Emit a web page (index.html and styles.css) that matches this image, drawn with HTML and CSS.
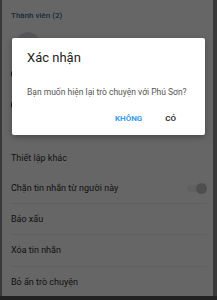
FILE: index.html
```html
<!DOCTYPE html>
<html lang="vi">
<head>
<meta charset="utf-8">
<link rel="stylesheet" href="styles.css">
</head>
<body>
<div class="frame">
  <div class="page">
    <div class="section-title">Thành viên (2)</div>
    <div class="member"><span class="avatar"></span></div>
    <div class="member small"><span class="icon"></span></div>
    <div class="member small"><span class="icon"></span></div>
    <div class="group-title">Thiết lập khác</div>
    <div class="row">
      <span>Chặn tin nhắn từ người này</span>
      <span class="toggle"><span class="knob"></span></span>
    </div>
    <div class="row">Báo xấu</div>
    <div class="row">Xóa tin nhắn</div>
    <div class="row last">Bỏ ẩn trò chuyện</div>
  </div>
</div>
<div class="overlay"></div>
<div class="dialog">
  <div class="dialog-title">Xác nhận</div>
  <div class="dialog-text">Bạn muốn hiện lại trò chuyện với Phú Sơn?</div>
  <div class="dialog-actions">
    <span class="btn btn-no">KHÔNG</span>
    <span class="btn btn-yes">CÓ</span>
  </div>
</div>
</body>
</html>
```
FILE: styles.css
```css
html, body {
  margin: 0;
  padding: 0;
  width: 217px;
  height: 300px;
  overflow: hidden;
  font-family: Roboto, "Noto Sans", Arial, sans-serif;
}
body {
  background: #555;
}
.frame {
  height: 296px;
  padding: 0 4px 0 2px;
  background: #909090;
}
.page {
  background: #fff;
  height: 296px;
  padding: 0 6px 0 9px;
  box-sizing: border-box;
}
.section-title {
  padding-top: 11px;
  height: 20px;
  font-size: 8px;
  font-weight: 500;
  color: #3f6ea6;
  box-sizing: border-box;
}
.member {
  height: 40px;
  padding-left: 5px;
  padding-top: 12px;
  box-sizing: border-box;
}
.avatar {
  display: block;
  width: 24px;
  height: 24px;
  border-radius: 50%;
  background: #d8dde4;
}
.member.small {
  height: 31px;
  padding-left: 0;
  padding-top: 8px;
}
.icon {
  display: block;
  width: 12px;
  height: 12px;
  border-radius: 50%;
  background: #222;
}
.group-title {
  height: 31px;
  margin-top: 20px;
  font-size: 9px;
  color: #333;
  display: flex;
  align-items: center;
}
.row {
  height: 31.2px;
  font-size: 9px;
  color: #2e2e2e;
  display: flex;
  align-items: center;
  justify-content: space-between;
  border-bottom: 1px solid #eeeeee;
  box-sizing: border-box;
}
.row.last {
  border-bottom: none;
}
.toggle {
  width: 19px;
  height: 7px;
  border-radius: 4px;
  background: #f0f0f0;
  position: relative;
  margin-right: 1px;
}
.knob {
  position: absolute;
  right: -1px;
  top: -2px;
  width: 11px;
  height: 11px;
  border-radius: 50%;
  background: #c4c4c4;
}
.overlay {
  position: absolute;
  inset: 0;
  background: rgba(0, 0, 0, 0.6);
}
.dialog {
  position: absolute;
  left: 12px;
  top: 38px;
  width: 193px;
  height: 97px;
  background: #fff;
  border-radius: 2px;
  box-shadow: 0 2px 6px rgba(0, 0, 0, 0.3);
  padding: 12px 15px 0 15px;
  box-sizing: border-box;
  display: flex;
  flex-direction: column;
}
.dialog-title {
  font-size: 13px;
  color: #222;
  height: 25px;
}
.dialog-text {
  margin-top: 12px;
  font-size: 8.5px;
  color: #555;
}
.dialog-actions {
  margin-top: 17px;
  display: flex;
  justify-content: flex-end;
  gap: 23px;
  padding-right: 14px;
}
.btn {
  font-size: 8px;
  font-weight: 700;
}
.btn-no {
  color: #3a9be8;
}
.btn-yes {
  color: #333;
}
```
